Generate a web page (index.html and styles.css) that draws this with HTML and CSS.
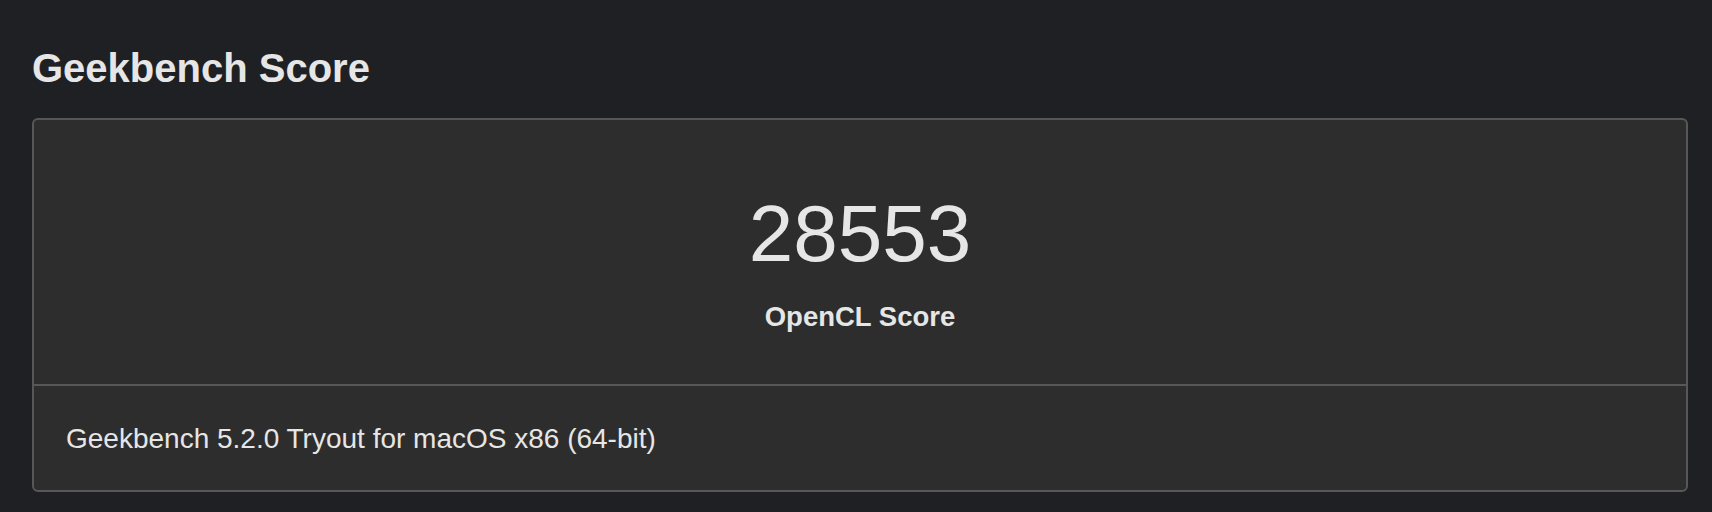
FILE: index.html
```html
<!DOCTYPE html>
<html lang="en">
<head>
<meta charset="utf-8">
<title>Geekbench Score</title>
<link rel="stylesheet" href="styles.css">
</head>
<body>
<main class="page">
  <h2 class="section-title">Geekbench Score</h2>
  <section class="score-card">
    <div class="score-main">
      <div class="score-value">28553</div>
      <div class="score-label">OpenCL Score</div>
    </div>
    <div class="score-footer">Geekbench 5.2.0 Tryout for macOS x86 (64-bit)</div>
  </section>
</main>
</body>
</html>
```
FILE: styles.css
```css
html, body {
  margin: 0;
  padding: 0;
  background: #1f2023;
  color: #e6e6e6;
  font-family: "Liberation Sans", Arial, Helvetica, sans-serif;
}

.page {
  padding: 44px 24px 0 32px;
}

.section-title {
  margin: 0 0 26px 0;
  font-size: 40px;
  line-height: 48px;
  font-weight: 700;
  color: #e6e6e6;
}

.score-card {
  background: #2d2d2d;
  border: 2px solid #575757;
  border-radius: 6px;
}

.score-main {
  display: flex;
  flex-direction: column;
  align-items: center;
  padding: 74px 0 51px 0;
  gap: 27px;
}

.score-value {
  font-size: 80px;
  line-height: 80px;
  font-weight: 400;
}

.score-label {
  font-size: 27.5px;
  line-height: 32px;
  font-weight: 700;
}

.score-footer {
  border-top: 2px solid #575757;
  padding: 37px 32px 35px 32px;
  font-size: 28px;
  line-height: 32px;
}
```
